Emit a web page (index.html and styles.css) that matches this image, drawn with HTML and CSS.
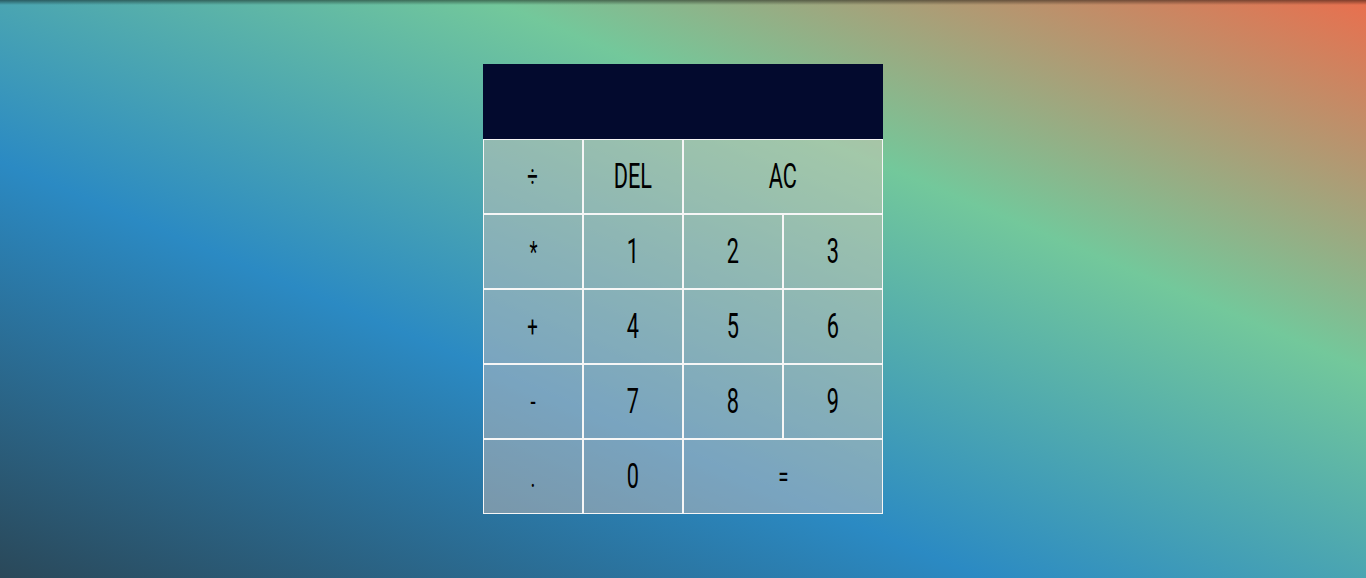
FILE: index.html
```html
<!DOCTYPE html>
<html lang="en">
<head>
<meta charset="utf-8">
<title>Calculator</title>
<link rel="stylesheet" href="styles.css">
</head>
<body>
<div class="calculator-grid">
  <div class="output">
    <div class="previous-operand"></div>
    <div class="current-operand"></div>
  </div>
  <button class="key op"><span>÷</span></button>
  <button class="key"><span>DEL</span></button>
  <button class="key span-two"><span>AC</span></button>
  <button class="key op"><span>*</span></button>
  <button class="key"><span>1</span></button>
  <button class="key"><span>2</span></button>
  <button class="key"><span>3</span></button>
  <button class="key op"><span>+</span></button>
  <button class="key"><span>4</span></button>
  <button class="key"><span>5</span></button>
  <button class="key"><span>6</span></button>
  <button class="key op"><span>-</span></button>
  <button class="key"><span>7</span></button>
  <button class="key"><span>8</span></button>
  <button class="key"><span>9</span></button>
  <button class="key op"><span>.</span></button>
  <button class="key"><span>0</span></button>
  <button class="key span-two op"><span>=</span></button>
</div>
</body>
</html>
```

FILE: styles.css
```css
*, *::before, *::after {
  box-sizing: border-box;
}

html, body {
  margin: 0;
  padding: 0;
}

body {
  min-height: 100vh;
  background:
    linear-gradient(to bottom, rgba(0, 0, 0, 0.45), rgba(0, 0, 0, 0) 5px),
    linear-gradient(to top right, #2a4859 0%, #2b8ac3 36%, #73c89b 68%, #e96f4e 100%);
  font-family: Roboto, "Liberation Sans", sans-serif;
}

.calculator-grid {
  display: grid;
  justify-content: center;
  align-content: center;
  min-height: 100vh;
  grid-template-columns: repeat(4, 100px);
  grid-template-rows: 75px repeat(5, 75px);
}

.output {
  grid-column: 1 / -1;
  background-color: #030a2e;
  display: flex;
  flex-direction: column;
  align-items: flex-end;
  justify-content: space-around;
  padding: 10px;
  color: #fff;
}

.key {
  margin: 0;
  padding: 0;
  border: 1px solid #f6f6f6;
  background-color: rgba(225, 200, 188, 0.43);
  color: #000;
  font-family: inherit;
  font-size: 35px;
  font-weight: 400;
  line-height: 1;
  display: flex;
  align-items: center;
  justify-content: center;
  cursor: pointer;
  outline: none;
}

.key span {
  display: inline-block;
  transform: scaleX(0.62);
}

.op {
  font-size: 30px;
}

.span-two {
  grid-column: span 2;
}
```
